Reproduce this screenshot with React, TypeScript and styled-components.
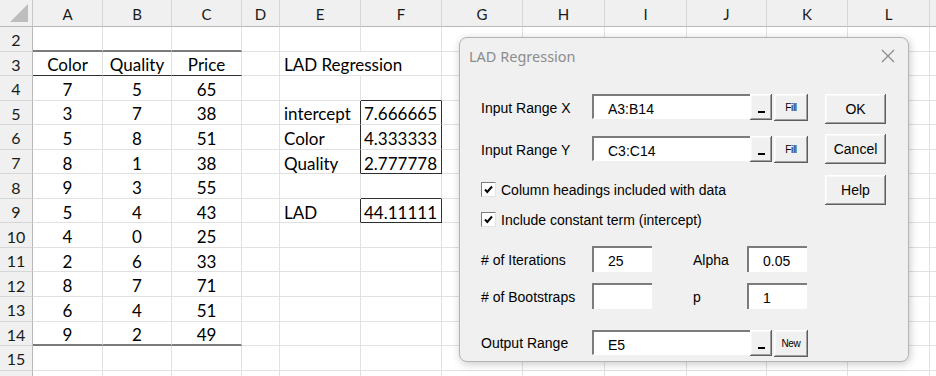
import styled, { createGlobalStyle } from "styled-components";

const GlobalStyle = createGlobalStyle`
  html, body {
    margin: 0;
    padding: 0;
    background: #ffffff;
  }
  body {
    width: 936px;
    height: 376px;
    overflow: hidden;
    font-family: Lato, "Liberation Sans", sans-serif;
  }
`;

const COLS = [
  { name: "A", w: 70 },
  { name: "B", w: 69 },
  { name: "C", w: 70 },
  { name: "D", w: 38 },
  { name: "E", w: 81 },
  { name: "F", w: 81 },
  { name: "G", w: 81 },
  { name: "H", w: 82 },
  { name: "I", w: 82 },
  { name: "J", w: 80 },
  { name: "K", w: 81 },
  { name: "L", w: 82 },
  { name: "", w: 60 },
];

const THICK = "2px solid #7b7b7b";
const DARK = "1px solid #2e2e2e";

type CellDef = {
  v?: string;
  align?: "left" | "center" | "right";
  bb?: string;
  rb?: string;
};

const c = (v: string): CellDef => ({ v, align: "center" });

// rows 2..15, columns A..F (rest empty)
const ROWS: CellDef[][] = [
  [{ bb: THICK }, { bb: THICK }, { bb: THICK }],
  [
    { ...c("Color"), bb: DARK },
    { ...c("Quality"), bb: DARK },
    { ...c("Price"), bb: DARK },
    {},
    { v: "LAD Regression", align: "left", rb: "1px solid transparent" },
  ],
  [c("7"), c("5"), c("65"), {}, {}, { bb: DARK }],
  [c("3"), c("7"), c("38"), {}, { v: "intercept", align: "left", rb: DARK }, { v: "7.666665", align: "right", rb: DARK }],
  [c("5"), c("8"), c("51"), {}, { v: "Color", align: "left", rb: DARK }, { v: "4.333333", align: "right", rb: DARK }],
  [c("8"), c("1"), c("38"), {}, { v: "Quality", align: "left", rb: DARK }, { v: "2.777778", align: "right", rb: DARK, bb: DARK }],
  [c("9"), c("3"), c("55"), {}, {}, { bb: DARK }],
  [c("5"), c("4"), c("43"), {}, { v: "LAD", align: "left", rb: DARK }, { v: "44.11111", align: "right", rb: DARK, bb: DARK }],
  [c("4"), c("0"), c("25")],
  [c("2"), c("6"), c("33")],
  [c("8"), c("7"), c("71")],
  [c("6"), c("4"), c("51")],
  [{ ...c("9"), bb: THICK }, { ...c("2"), bb: THICK }, { ...c("49"), bb: THICK }],
  [],
];

function App() {
  return (
    <>
      <GlobalStyle />
      <Page>
        <Sheet>
          <Corner>
            <CornerMark />
          </Corner>
          {COLS.map((col, i) => (
            <ColHead key={i}>{col.name}</ColHead>
          ))}
          {ROWS.map((row, r) => (
            <Row key={r} num={String(r + 2)} cells={row} />
          ))}
          {/* row 16 is only a sliver at the bottom edge */}
          <Row num="" cells={[]} />
        </Sheet>

        <Dialog>
          <TitleBar>
            <Title>LAD Regression</Title>
            <CloseIcon width="14" height="14" viewBox="0 0 14 14">
              <path d="M1 1 L13 13 M13 1 L1 13" stroke="#8a8a8a" strokeWidth="1.2" fill="none" />
            </CloseIcon>
          </TitleBar>
          <Body>
            <Main>
              <FieldRow>
                <Label $lh={29}>Input Range X</Label>
                <RangeField value="A3:B14" />
                <SmallButton>Fill</SmallButton>
              </FieldRow>
              <FieldRow $mt={15}>
                <Label $lh={29}>Input Range Y</Label>
                <RangeField value="C3:C14" />
                <SmallButton>Fill</SmallButton>
              </FieldRow>
              <CheckRow $mt={19}>
                <CheckBox />
                <span>Column headings included with data</span>
              </CheckRow>
              <CheckRow $mt={15}>
                <CheckBox />
                <span>Include constant term (intercept)</span>
              </CheckRow>
              <FieldRow $mt={19}>
                <Label $lh={28}># of Iterations</Label>
                <NumBox>25</NumBox>
                <SideLabel>Alpha</SideLabel>
                <NumBox>0.05</NumBox>
              </FieldRow>
              <FieldRow $mt={10}>
                <Label $lh={28}># of Bootstraps</Label>
                <NumBox />
                <SideLabel>p</SideLabel>
                <NumBox>1</NumBox>
              </FieldRow>
              <FieldRow $mt={20}>
                <Label $lh={26}>Output Range</Label>
                <RangeField value="E5" />
                <SmallButton>New</SmallButton>
              </FieldRow>
            </Main>
            <Side>
              <DlgButton>OK</DlgButton>
              <DlgButton $mt={10}>Cancel</DlgButton>
              <DlgButton $mt={11}>Help</DlgButton>
            </Side>
          </Body>
        </Dialog>
      </Page>
    </>
  );
}

function Row({ num, cells }: { num: string; cells: CellDef[] }) {
  return (
    <>
      <RowHead>{num}</RowHead>
      {COLS.map((_, i) => {
        const cell = cells[i] || {};
        return (
          <Cell key={i} $align={cell.align || "left"} $bb={cell.bb} $rb={cell.rb}>
            {cell.v}
          </Cell>
        );
      })}
    </>
  );
}

function RangeField({ value }: { value: string }) {
  return (
    <RangeWrap>
      <RangeInput>{value}</RangeInput>
      <RefButton>
        <RefBar />
      </RefButton>
    </RangeWrap>
  );
}

function CheckBox() {
  return (
    <Box>
      <svg width="11" height="11" viewBox="0 0 11 11">
        <path d="M2 5.5 L4.3 8 L9 2.5" stroke="#000" strokeWidth="2" fill="none" />
      </svg>
    </Box>
  );
}

const Page = styled.div`
  position: relative;
  width: 936px;
  height: 376px;
  overflow: hidden;
`;

const Sheet = styled.div`
  display: grid;
  grid-template-columns: 33px ${COLS.map((c) => c.w + "px").join(" ")};
  grid-template-rows: 27px repeat(15, 24.55px);
  color: #000;
`;

const Corner = styled.div`
  position: relative;
  background: #f0f0f0;
  border-right: 1px solid #c8c8c8;
  border-bottom: 1px solid #b8b8b8;
`;

const CornerMark = styled.div`
  position: absolute;
  right: 4px;
  bottom: 4px;
  width: 0;
  height: 0;
  border-left: 18px solid transparent;
  border-bottom: 18px solid #bdbdbd;
`;

const ColHead = styled.div`
  display: flex;
  align-items: center;
  justify-content: center;
  padding-top: 2px;
  box-sizing: border-box;
  background: #f0f0f0;
  border-right: 1px solid #d6d6d6;
  border-bottom: 1px solid #b8b8b8;
  font-size: 15px;
  color: #1a1a1a;
`;

const RowHead = styled.div`
  display: flex;
  align-items: center;
  justify-content: center;
  padding-top: 2px;
  box-sizing: border-box;
  background: #f0f0f0;
  border-right: 1px solid #b8b8b8;
  border-bottom: 1px solid #d6d6d6;
  font-size: 16px;
  color: #1a1a1a;
`;

const Cell = styled.div<{ $align: string; $bb?: string; $rb?: string }>`
  display: flex;
  align-items: center;
  justify-content: ${(p) =>
    p.$align === "center" ? "center" : p.$align === "right" ? "flex-end" : "flex-start"};
  box-sizing: border-box;
  padding: 3px 4px 0 4px;
  border-right: ${(p) => p.$rb || "1px solid #e1e1e1"};
  border-bottom: ${(p) => p.$bb || "1px solid #e1e1e1"};
  font-size: 17px;
  white-space: nowrap;
  overflow: visible;
  min-width: 0;
`;

const Dialog = styled.div`
  position: absolute;
  left: 459px;
  top: 37px;
  width: 450px;
  height: 325px;
  box-sizing: border-box;
  background: #f0f0f0;
  border: 1px solid #b4b4b4;
  border-radius: 8px;
  box-shadow: 1px 2px 8px rgba(0, 0, 0, 0.22);
  font-family: "Liberation Sans", Arial, sans-serif;
  font-size: 14px;
  color: #000;
  font-variant-ligatures: none;
`;

const TitleBar = styled.div`
  height: 35px;
  display: flex;
  align-items: center;
  justify-content: space-between;
  padding: 0 13px 0 9px;
`;

const Title = styled.span`
  font-family: "Noto Sans", "Open Sans", sans-serif;
  font-size: 14.5px;
  color: #8c8c8c;
`;

const CloseIcon = styled.svg`
  display: block;
`;

const Body = styled.div`
  display: flex;
  padding: 21px 0 0 21px;
`;

const Main = styled.div`
  width: 327px;
  display: flex;
  flex-direction: column;
`;

const Side = styled.div`
  margin-left: 17px;
  display: flex;
  flex-direction: column;
`;

const FieldRow = styled.div<{ $mt?: number }>`
  display: flex;
  align-items: flex-start;
  height: 27px;
  margin-top: ${(p) => p.$mt || 0}px;
`;

const Label = styled.div<{ $lh: number }>`
  width: 111px;
  line-height: ${(p) => p.$lh}px;
  white-space: nowrap;
`;

const SideLabel = styled.div`
  margin-left: 41px;
  width: 54px;
  line-height: 28px;
`;

const RangeWrap = styled.div`
  display: flex;
  width: 180px;
  height: 25px;
`;

const RangeInput = styled.div`
  flex: 1;
  box-sizing: border-box;
  background: #fff;
  border-top: 2px solid #7c7c7c;
  border-left: 2px solid #7c7c7c;
  border-bottom: 1px solid #fff;
  padding: 2px 0 0 14px;
  line-height: 22px;
`;

const raised = `
  background: #f0f0f0;
  box-sizing: border-box;
  box-shadow: inset -1px -1px #5e5e5e, inset 1px 1px #ffffff,
    inset -2px -2px #a0a0a0, inset 2px 2px #f8f8f8;
`;

const RefButton = styled.div`
  ${raised}
  width: 22px;
  height: 26px;
  display: flex;
  align-items: flex-end;
  justify-content: center;
  padding-bottom: 7px;
`;

const RefBar = styled.div`
  width: 7px;
  height: 2px;
  background: #000;
`;

const SmallButton = styled.div`
  ${raised}
  margin-left: 2px;
  width: 34px;
  height: 27px;
  display: flex;
  align-items: center;
  justify-content: center;
  font-size: 10px;
  letter-spacing: -0.3px;
  font-variant-ligatures: none;
`;

const NumBox = styled.div`
  width: 60px;
  height: 26px;
  box-sizing: border-box;
  background: #fff;
  border-top: 2px solid #7c7c7c;
  border-left: 2px solid #7c7c7c;
  padding: 2px 0 0 14px;
  line-height: 22px;
`;

const CheckRow = styled.div<{ $mt?: number }>`
  display: flex;
  align-items: center;
  gap: 5px;
  height: 15px;
  margin-top: ${(p) => p.$mt || 0}px;
  white-space: nowrap;
`;

const Box = styled.div`
  width: 15px;
  height: 15px;
  box-sizing: border-box;
  background: #fff;
  border-top: 1px solid #7c7c7c;
  border-left: 1px solid #7c7c7c;
  border-right: 1px solid #e3e3e3;
  border-bottom: 1px solid #e3e3e3;
  display: flex;
  align-items: center;
  justify-content: center;
`;

const DlgButton = styled.div<{ $mt?: number }>`
  ${raised}
  width: 61px;
  height: 30px;
  margin-top: ${(p) => p.$mt || 0}px;
  display: flex;
  align-items: center;
  justify-content: center;
`;

export default App;
